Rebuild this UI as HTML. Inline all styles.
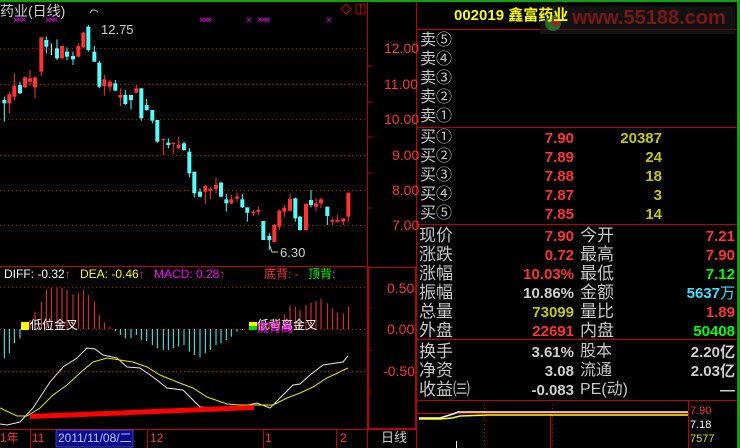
<!DOCTYPE html>
<html><head><meta charset="utf-8"><style>
*{margin:0;padding:0}
body{width:740px;height:448px;background:#000;overflow:hidden;position:relative;font-family:"Liberation Sans","Noto Sans CJK SC",sans-serif;}
.t{position:absolute;white-space:nowrap;line-height:1}
.r{color:#ff3333}.y{color:#e0e000}.w{color:#d0d0d0}.g{color:#00ff00}.c{color:#40e0ff}.yl{color:#c8c800}
.lb{font-size:16px;color:#c8c8c8;left:419px}
.v{font-size:15px;font-weight:bold;text-align:right}
.mx{position:absolute;top:16px;font-size:10px;color:#ff00ff;line-height:1;letter-spacing:-2px}
</style></head><body>
<svg id="s" width="740" height="448" style="position:absolute;left:0;top:0">
<rect x="0" y="0" width="740" height="2" fill="#10a010"/>
<rect x="737" y="0" width="3" height="448" fill="#10a010"/>
<g stroke="#d00000" stroke-width="1" stroke-dasharray="1,3">
<line x1="0" y1="48.5" x2="367" y2="48.5"/><line x1="0" y1="84.5" x2="367" y2="84.5"/><line x1="0" y1="119.5" x2="367" y2="119.5"/><line x1="0" y1="155.5" x2="367" y2="155.5"/><line x1="0" y1="190.5" x2="367" y2="190.5"/><line x1="0" y1="225.5" x2="367" y2="225.5"/>
<line x1="0" y1="287.5" x2="367" y2="287.5"/><line x1="0" y1="329.5" x2="367" y2="329.5"/><line x1="0" y1="371.5" x2="367" y2="371.5"/>
<line x1="484.5" y1="404" x2="484.5" y2="448"/><line x1="552.5" y1="404" x2="552.5" y2="448"/>
</g>
<g stroke="#c00000" stroke-width="1" fill="none">
<line x1="367.5" y1="2" x2="367.5" y2="448"/>
<line x1="0" y1="266.5" x2="367" y2="266.5"/>
<line x1="0" y1="429.5" x2="416" y2="429.5"/>
<rect x="368.5" y="267.5" width="47" height="161"/>
<line x1="416.5" y1="2" x2="416.5" y2="448"/>
<line x1="417" y1="29.5" x2="737" y2="29.5"/>
<line x1="417" y1="127.5" x2="737" y2="127.5"/>
<line x1="417" y1="224.5" x2="737" y2="224.5"/>
<line x1="417" y1="339.5" x2="737" y2="339.5"/>
<line x1="417" y1="400.5" x2="737" y2="400.5"/>
<line x1="417" y1="413.5" x2="688" y2="413.5"/>
<line x1="550.5" y1="413" x2="550.5" y2="448"/>
<line x1="688.5" y1="401" x2="688.5" y2="448"/>
<line x1="30.5" y1="430" x2="30.5" y2="448"/><line x1="147.5" y1="430" x2="147.5" y2="448"/><line x1="263.5" y1="430" x2="263.5" y2="448"/><line x1="336.5" y1="430" x2="336.5" y2="448"/>
</g>
<g stroke="#c00000" stroke-width="1">
<line x1="368" y1="66" x2="372" y2="66"/><line x1="368" y1="102" x2="372" y2="102"/><line x1="368" y1="137" x2="372" y2="137"/><line x1="368" y1="173" x2="372" y2="173"/><line x1="368" y1="208" x2="372" y2="208"/>
<line x1="368" y1="308" x2="372" y2="308"/><line x1="368" y1="350" x2="372" y2="350"/><line x1="368" y1="392" x2="372" y2="392"/>
</g>
<rect x="56" y="430" width="77" height="17" fill="#0a0a90" stroke="#8080ff" stroke-width="0.5"/>
<g id="cd"></g><g id="mh"></g>
<polyline fill="none" stroke="#e8e8e8" stroke-width="1" points="0,424 7,425 20,422 33,408 50,382 63,367 77,358 87,348 95,349 103,355 117,358 127,367 140,368 153,377 167,388 183,390 200,407 213,408 227,410 240,407 257,403 270,408 280,398 293,385 300,384 310,375 323,365 343,362 348,356"/>
<polyline fill="none" stroke="#e8e800" stroke-width="1" points="0,408 17,416 27,416 40,408 53,395 67,385 80,373 93,362 107,358 120,360 133,362 147,367 160,375 177,382 193,388 207,397 227,404 240,405 260,405 273,405 287,398 300,393 313,387 327,378 348,368"/>
<polygon fill="#ff0000" points="30,414 254,405 254,410 30,419"/>
<rect x="21" y="322" width="8" height="8" fill="#ffff00"/>
<rect x="249" y="322" width="8" height="4" fill="#ffff00"/><rect x="249" y="326" width="8" height="4" fill="#00e000"/>
<polyline fill="none" stroke="#c8c8c8" points="90,13 92,10 95,10 98,12"/>
<polyline fill="none" stroke="#c8c8c8" points="278,252 272,252 270,246"/>
<path d="M346 4 L351 9 L346 14 L341 9Z" fill="none" stroke="#c00000"/>
<rect x="356" y="4" width="9" height="10" fill="none" stroke="#c00000"/><line x1="360.5" y1="4" x2="360.5" y2="14" stroke="#c00000"/>
<polyline fill="none" stroke="#fff" stroke-width="1.5" points="419,418 440,418 453,414 458,412 688,412"/>
<polyline fill="none" stroke="#ffff00" stroke-width="1.5" points="419,419 440,419 452,418 460,416 488,415 600,415 688,415"/>
<line x1="456.5" y1="441" x2="456.5" y2="448" stroke="#fff"/>
<rect x="540" y="6" width="195" height="28" fill="#1a1a1a" opacity="0.7"/>
<circle cx="553" cy="23" r="8" fill="#2a6a2a"/><circle cx="556" cy="22" r="4" fill="#a02020"/>
</svg>
<div class="t w" style="left:0;top:4px;font-size:14px">药业(日线)</div>
<div class="mx" style="left:13px">×××</div>
<div class="mx" style="left:45px">×××</div>
<div class="mx" style="left:199px">×××</div>
<div class="mx" style="left:246px">×</div>
<div class="mx" style="left:257px">×××</div>
<div class="mx" style="left:326px">×</div>
<div class="t w" style="left:101px;top:23px;font-size:13px">12.75</div>
<div class="t w" style="left:280px;top:246px;font-size:13px">6.30</div>
<div class="t r" style="left:384px;top:41px;font-size:14px">12.00</div>
<div class="t r" style="left:384px;top:77px;font-size:14px">11.00</div>
<div class="t r" style="left:384px;top:112px;font-size:14px">10.00</div>
<div class="t r" style="left:392px;top:148px;font-size:14px">9.00</div>
<div class="t r" style="left:392px;top:183px;font-size:14px">8.00</div>
<div class="t r" style="left:392px;top:218px;font-size:14px">7.00</div>
<div class="t r" style="left:387px;top:281px;font-size:14px">0.50</div>
<div class="t r" style="left:387px;top:322px;font-size:14px">0.00</div>
<div class="t r" style="left:383px;top:364px;font-size:14px">-0.50</div>
<div class="t" style="left:4px;top:268px;font-size:12px;color:#fff">DIFF: -0.32<span class="r">↑</span></div>
<div class="t" style="left:80px;top:268px;font-size:12px;color:#ffff00">DEA: -0.46<span class="r">↑</span></div>
<div class="t" style="left:154px;top:268px;font-size:12px;color:#ff00ff">MACD: 0.28<span class="r">↑</span></div>
<div class="t r" style="left:264px;top:268px;font-size:12px">底背: -</div>
<div class="t g" style="left:308px;top:268px;font-size:12px">顶背:</div>
<div class="t" style="left:30px;top:319px;font-size:12px;color:#fff">低位金叉</div>
<div class="t" style="left:257px;top:319px;font-size:12px;color:#fff">低背离金叉</div>
<div class="t" style="left:257px;top:322px;font-size:12px;color:#ff00ff">底背离</div>
<div class="t r" style="left:0;top:432px;font-size:12px">1年</div>
<div class="t r" style="left:32px;top:432px;font-size:12px">11</div>
<div class="t" style="left:58px;top:432px;font-size:12px;color:#c0c0ff">2011/11/08/二</div>
<div class="t r" style="left:150px;top:432px;font-size:12px">12</div>
<div class="t r" style="left:265px;top:432px;font-size:12px">1</div>
<div class="t r" style="left:340px;top:432px;font-size:12px">2</div>
<div class="t w" style="left:381px;top:431px;font-size:13px">日线</div>
<div class="t" style="left:454px;top:8px;font-size:15px;font-weight:bold;color:#ffff00">002019 鑫富药业</div>
<div class="t" style="left:572px;top:8px;font-size:20px;font-weight:bold;color:#7a1818;font-family:'Liberation Sans',sans-serif">www.55188.com</div>
<div id="rp"></div>
<div class="t r" style="left:690px;top:406px;font-size:11px">7.90</div>
<div class="t" style="left:690px;top:420px;font-size:11px;color:#fff">7.18</div>
<div class="t y" style="left:690px;top:434px;font-size:11px">7577</div>
<script>
var ns="http://www.w3.org/2000/svg";
function el(p,t,a){var e=document.createElementNS(ns,t);for(var k in a)e.setAttribute(k,a[k]);p.appendChild(e);}
var C={r:"#ff3232",c:"#54fcfc",w:"#ffffff"};
var d=[[13,300,310,290,365,'c'],[28,283,310,275,340,'r'],[43,258,290,220,300,'r'],[60,255,280,245,282,'c'],[75,232,262,228,265,'r'],[90,235,245,210,258,'r'],[105,232,262,230,295,'r'],[124,112,215,112,228,'r'],[139,120,140,110,160,'c'],[154,143,145,130,165,'w'],[171,145,175,118,180,'c'],[186,138,175,138,178,'r'],[201,155,170,142,180,'c'],[219,168,178,155,195,'c'],[235,138,170,130,172,'r'],[250,98,142,95,145,'r'],[265,80,150,75,155,'c'],[283,155,185,138,186,'c'],[298,188,260,183,265,'c'],[313,238,258,225,287,'r'],[330,245,260,240,275,'r'],[346,250,272,240,273,'c'],[361,285,293,265,318,'r'],[376,285,312,270,315,'c'],[393,285,300,285,328,'c'],[409,265,278,255,280,'r'],[424,265,355,265,362,'c'],[440,315,330,297,332,'c'],[457,330,362,330,370,'c'],[472,360,425,360,428,'c'],[490,417,420,417,465,'r'],[505,428,435,415,445,'c'],[520,428,432,428,462,'r'],[536,435,445,410,448,'r'],[552,430,450,425,452,'c'],[568,455,520,445,532,'c'],[583,515,580,515,592,'c'],[600,575,590,565,592,'c'],[616,558,575,555,612,'r'],[631,567,572,562,598,'r'],[648,555,567,532,580,'r'],[663,548,590,545,592,'c'],[679,598,610,582,635,'c'],[694,598,610,585,612,'r'],[711,590,596,578,605,'r'],[727,598,622,582,624,'c'],[742,622,638,622,665,'c'],[760,635,640,630,648,'r'],[775,630,635,620,645,'r'],[790,663,720,663,720,'c'],[808,708,720,700,750,'c'],[823,675,726,672,728,'r'],[838,632,680,628,690,'r'],[853,623,635,615,650,'r'],[870,597,632,582,635,'r'],[886,595,655,593,665,'c'],[900,650,690,648,692,'c'],[918,612,690,610,692,'r'],[933,600,615,570,622,'c'],[948,610,620,595,635,'r'],[963,598,610,592,625,'r'],[982,620,648,620,675,'c'],[997,660,665,652,675,'r'],[1012,660,665,645,668,'r'],[1030,655,665,655,675,'r'],[1045,578,650,578,665,'r']];
var g=document.getElementById('cd');
d.forEach(function(a){var x=a[0]/3,col=C[a[5]];
el(g,'line',{x1:x,x2:x,y1:a[3]/3,y2:a[4]/3,stroke:col,'stroke-width':1});
var h=Math.max(1,(a[2]-a[1])/3);el(g,'rect',{x:x-2,y:a[1]/3,width:a[5]=='w'?0.1:4,height:h,fill:col});});
var m=[[13,400],[28,385],[43,355],[60,340],[90,285],[105,260],[124,230],[139,195],[154,188],[171,188],[186,188],[201,195],[219,208],[235,205],[250,195],[265,210],[283,230],[298,270],[313,292],[330,305],[346,318],[361,330],[376,340],[393,340],[409,330],[424,345],[440,348],[457,360],[472,370],[490,375],[505,375],[520,370],[536,365],[552,360],[568,380],[583,390],[600,397],[616,385],[631,375],[648,360],[663,355],[679,345],[694,335],[711,320],[727,315],[760,300],[775,295],[790,300],[808,290],[823,288],[838,280],[853,268],[870,242],[886,245],[900,255],[918,240],[933,232],[948,228],[963,222],[982,235],[997,250],[1012,262],[1030,265],[1045,245]];
var h=document.getElementById('mh');
m.forEach(function(a){var x=a[0]/3,yy=a[1]/3+225,z=329;el(h,'line',{x1:x,x2:x,y1:Math.min(yy,z),y2:Math.max(yy,z),stroke:yy<z?'#ff3232':'#54fcfc','stroke-width':1});});
var rp=document.getElementById('rp'),s='';
function T(x,y,txt,cls,st){s+='<div class="t '+cls+'" style="left:'+x+'px;top:'+y+'px;'+(st||'')+'">'+txt+'</div>';}
function R(r,y,txt,cls){s+='<div class="t v '+cls+'" style="right:'+(740-r)+'px;top:'+y+'px">'+txt+'</div>';}
['卖⑤','卖④','卖③','卖②','卖①'].forEach(function(t,i){T(420,33+i*19,t,'lb');});
var b=[['买①','7.90','20387'],['买②','7.89','24'],['买③','7.88','18'],['买④','7.87','3'],['买⑤','7.85','14']];
b.forEach(function(a,i){var y=130+i*19;T(420,y,a[0],'lb');R(574,y+1,a[1],'r');R(662,y+1,a[2],'yl');});
var st=[['现价','7.90','r','今开','7.21','r'],['涨跌','0.72','r','最高','7.90','r'],['涨幅','10.03%','r','最低','7.12','g'],['振幅','10.86%','w','金额','5637<span style="font-weight:normal">万</span>','c'],['总量','73099','yl','量比','1.89','r'],['外盘','22691','r','内盘','50408','g']];
st.forEach(function(a,i){var y=227+i*19;T(419,y,a[0],'lb','font-size:17px');R(574,y+2,a[1],a[2]);T(580,y,a[3],'lb','font-size:17px;left:580px');R(735,y+2,a[4],a[5]);});
var st2=[['换手','3.61%','股本','2.20亿'],['净资','3.08','流通','2.03亿'],['收益㈢','-0.083','PE(动)','—']];
st2.forEach(function(a,i){var y=343+i*19;T(419,y,a[0],'lb','font-size:17px');R(574,y+2,a[1],'w');T(580,y+1,a[2],'lb','left:580px');R(735,y+2,a[3],'w');});
rp.innerHTML=s;
</script>
</body></html>
